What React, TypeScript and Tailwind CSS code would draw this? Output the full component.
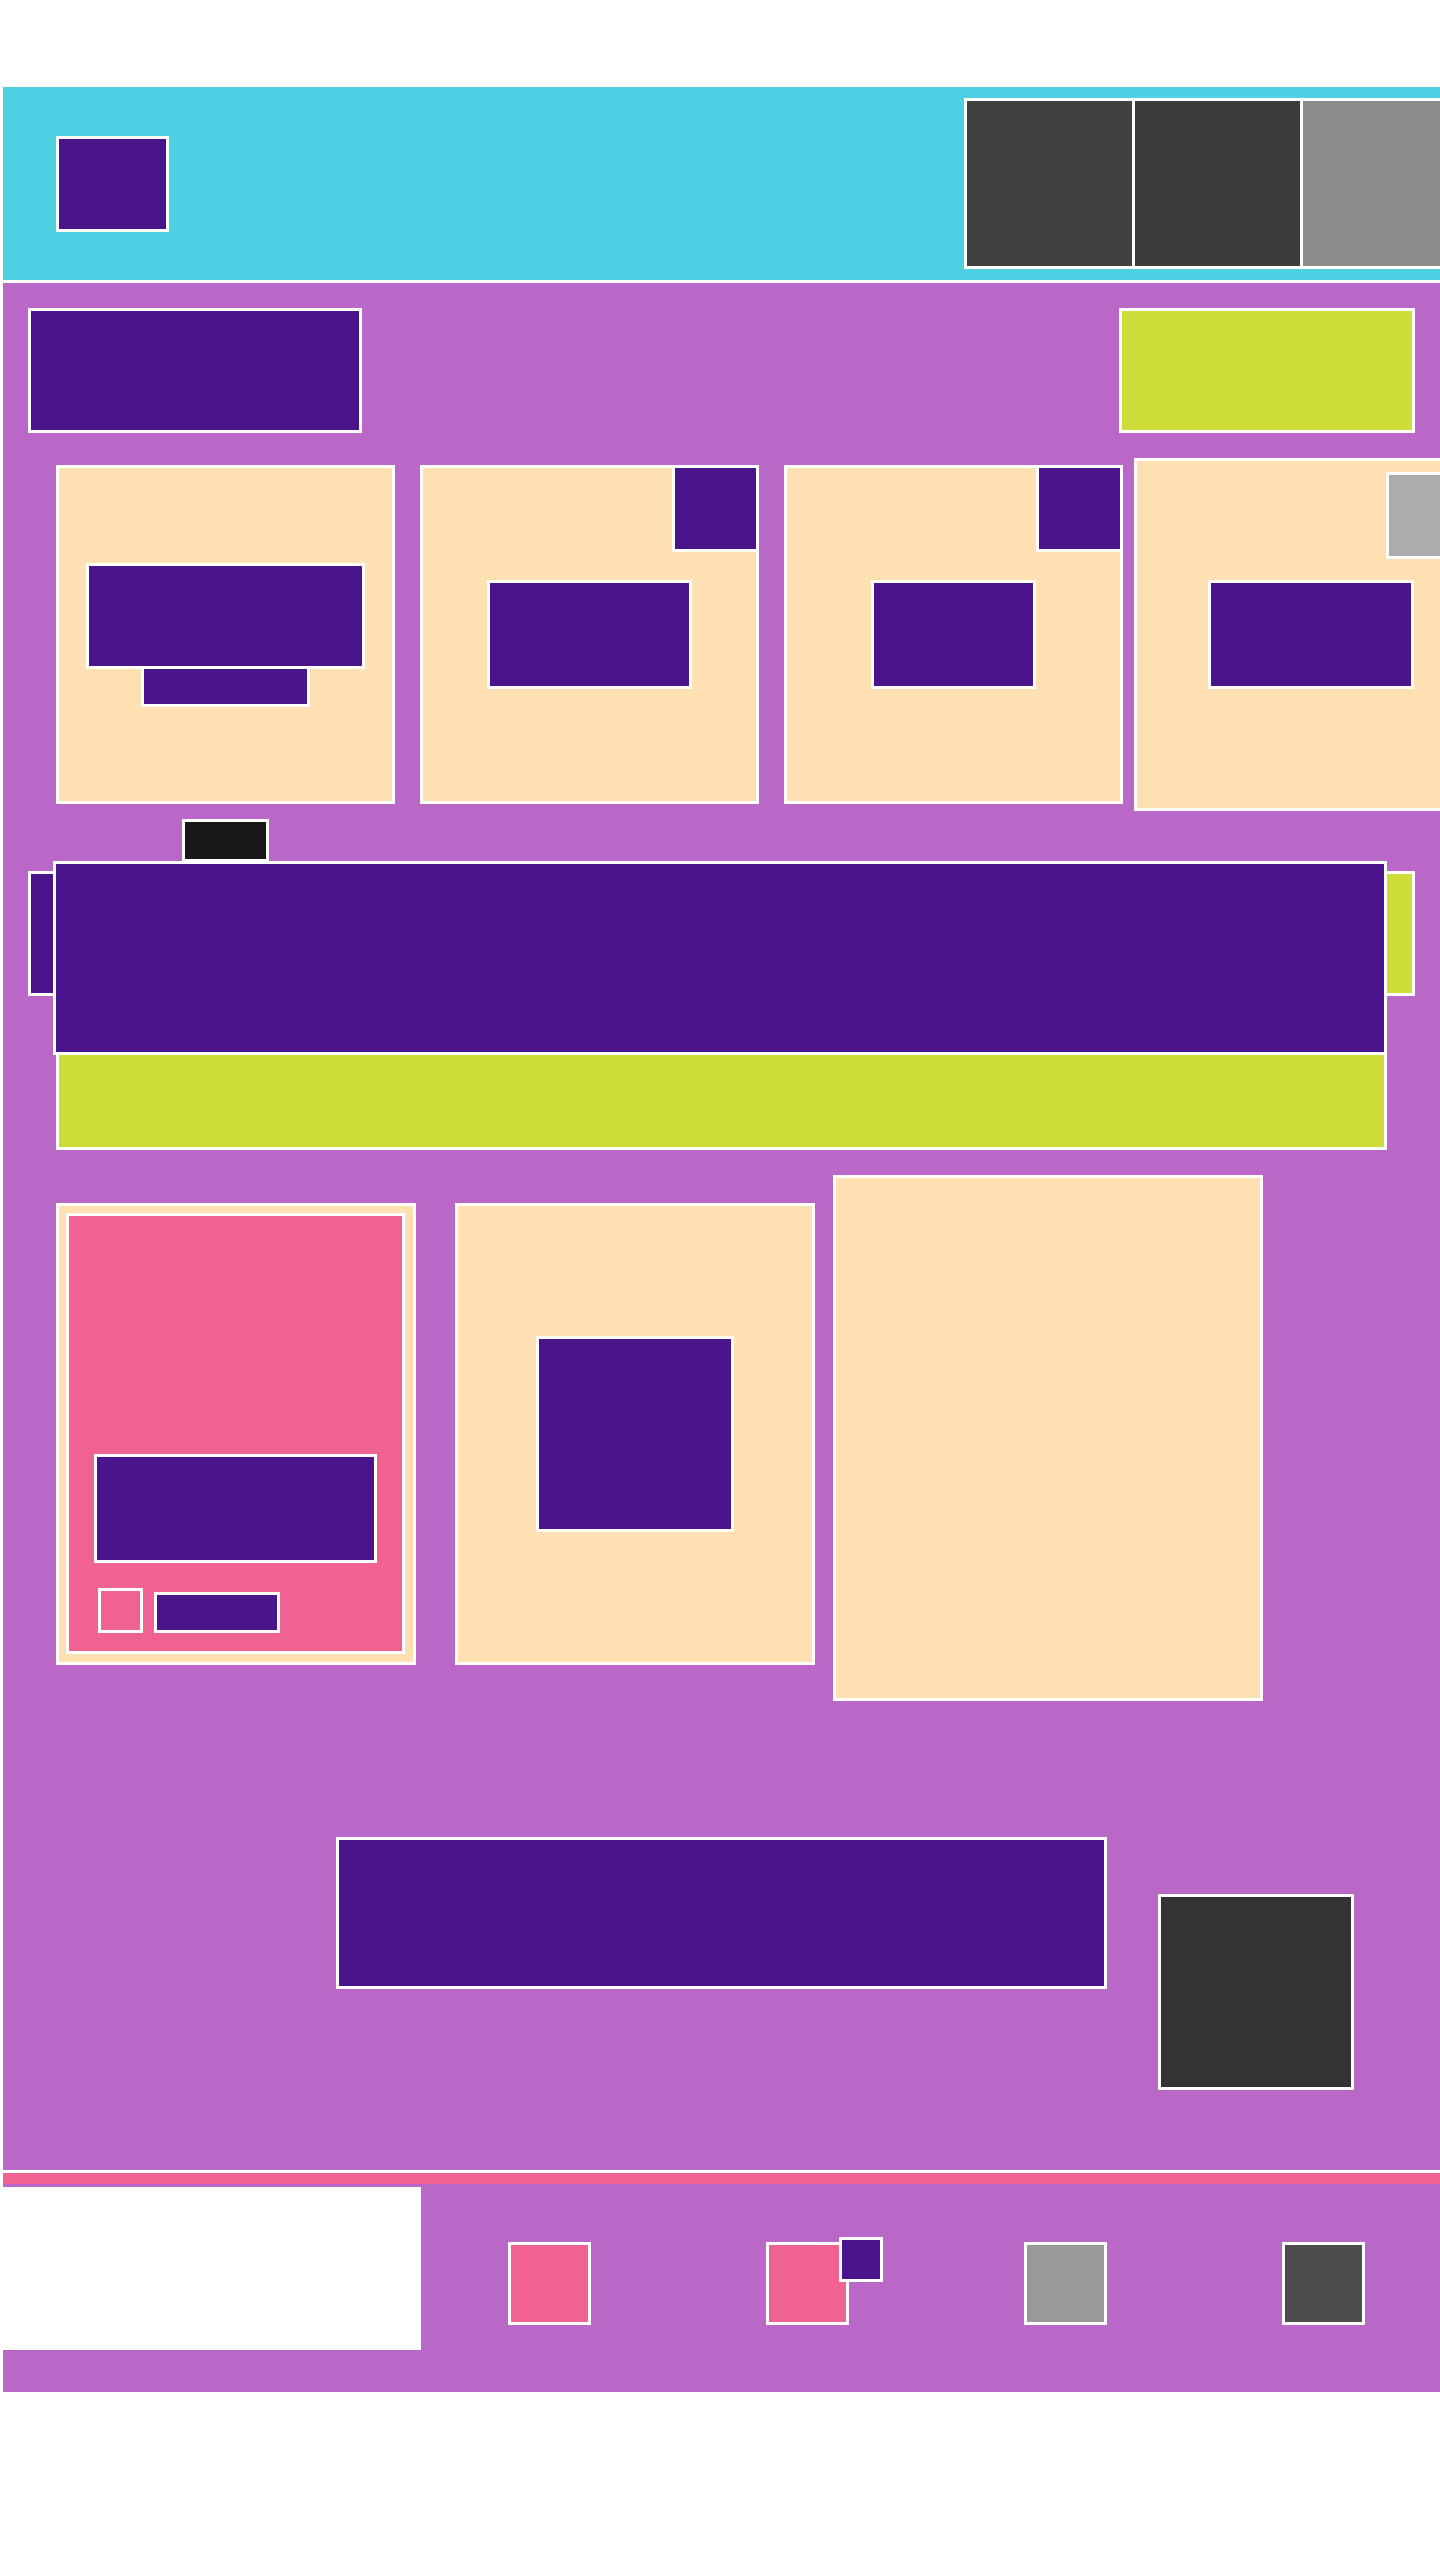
import React from "react";

const B = "border-[3px] border-white";

function Card({ children, className = "" }: { children?: React.ReactNode; className?: string }) {
  return (
    <div className={`relative shrink-0 bg-[#ffe0b2] ${B} flex items-center justify-center ${className}`}>
      {children}
    </div>
  );
}

export default function App() {
  return (
    <div className="w-[1440px] min-h-[2560px] overflow-hidden bg-white pt-[87px] pl-[3px]" style={{ fontFamily: "Inter, sans-serif" }}>
      {/* Header */}
      <header className="w-[1437px] h-[196px] bg-[#4dd0e1] border-b-[3px] border-white flex items-center">
        <div className={`shrink-0 ml-[53px] w-[113px] h-[96px] bg-[#4a148c] ${B}`} />
        <nav className="shrink-0 ml-[795px] flex gap-[3px] bg-white p-[3px]">
          <div className="w-[165px] h-[165px] bg-[#414141]" />
          <div className="w-[165px] h-[165px] bg-[#3b3b3b]" />
          <div className="w-[165px] h-[165px] bg-[#8d8d8d]" />
        </nav>
      </header>

      {/* Main */}
      <main className="w-[1437px] bg-[#ba68c8] pt-[25px] pb-[80px] border-b-[3px] border-white">
        {/* Title row */}
        <div className="flex justify-between px-[25px]">
          <div className={`w-[334px] h-[125px] bg-[#4a148c] ${B}`} />
          <div className={`w-[296px] h-[125px] bg-[#cddc39] ${B}`} />
        </div>

        {/* Cards row */}
        <div className="mt-[25px] flex items-center gap-[25px] pl-[53px]">
          <Card className="w-[339px] h-[339px]">
            <div className="flex flex-col items-center">
              <div className={`w-[279px] h-[106px] bg-[#4a148c] ${B}`} />
              <div className={`-mt-[3px] w-[169px] h-[41px] bg-[#4a148c] ${B}`} />
            </div>
          </Card>
          <Card className="w-[339px] h-[339px]">
            <div className={`w-[205px] h-[109px] bg-[#4a148c] ${B}`} />
            <div className={`absolute -top-[3px] -right-[3px] w-[87px] h-[87px] bg-[#4a148c] ${B}`} />
          </Card>
          <Card className="w-[339px] h-[339px]">
            <div className={`w-[165px] h-[109px] bg-[#4a148c] ${B}`} />
            <div className={`absolute -top-[3px] -right-[3px] w-[87px] h-[87px] bg-[#4a148c] ${B}`} />
          </Card>
          <Card className="-ml-[14px] w-[353px] h-[353px]">
            <div className={`w-[206px] h-[109px] bg-[#4a148c] ${B}`} />
            <div className={`absolute top-[11px] right-[11px] w-[87px] h-[87px] bg-[#acacac] ${B}`} />
          </Card>
        </div>

        {/* Toolbar row with overlay */}
        <div className="relative mt-[60px] flex justify-between px-[25px]">
          <div className={`w-[334px] h-[125px] bg-[#4a148c] ${B}`} />
          <div className={`w-[296px] h-[125px] bg-[#cddc39] ${B}`} />
          <div className="absolute left-[50px] -top-[52px] w-[1334px] flex flex-col">
            <div className={`ml-[129px] w-[87px] h-[43px] bg-[#181818] ${B}`} />
            <div className={`-mt-[1px] w-[1334px] h-[194px] bg-[#4a148c] ${B}`} />
            <div className={`-mt-[3px] ml-[3px] w-[1331px] h-[98px] bg-[#cddc39] ${B}`} />
          </div>
        </div>

        {/* Lower cards row */}
        <div className="mt-[207px] flex items-start pl-[53px]">
          <div className={`shrink-0 w-[360px] h-[462px] bg-[#ffe0b2] ${B} p-[7px]`}>
            <div className={`w-[339px] h-[441px] bg-[#f06292] ${B} flex flex-col justify-end pl-[25px] pb-[18px]`}>
              <div className={`w-[283px] h-[109px] bg-[#4a148c] ${B}`} />
              <div className="mt-[25px] ml-[4px] flex items-end gap-[11px]">
                <div className={`w-[45px] h-[45px] bg-[#f06292] ${B}`} />
                <div className={`w-[126px] h-[41px] bg-[#4a148c] ${B}`} />
              </div>
            </div>
          </div>
          <div className={`shrink-0 ml-[39px] w-[360px] h-[462px] bg-[#ffe0b2] ${B} flex items-center justify-center`}>
            <div className={`w-[198px] h-[196px] bg-[#4a148c] ${B}`} />
          </div>
          <div className={`shrink-0 ml-[18px] -mt-[28px] w-[430px] h-[526px] bg-[#ffe0b2] ${B}`} />
        </div>

        {/* Bottom row */}
        <div className="mt-[136px] flex items-start pl-[333px]">
          <div className={`shrink-0 w-[771px] h-[152px] bg-[#4a148c] ${B}`} />
          <div className={`shrink-0 ml-[51px] mt-[57px] w-[196px] h-[196px] bg-[#333333] ${B}`} />
        </div>
      </main>

      {/* Footer */}
      <footer className="w-[1437px] border-t-[11px] border-[#f06292] bg-[#ba68c8] pt-[3px] pb-[42px] flex items-start">
        <div className="shrink-0 w-[418px] h-[163px] bg-white" />
        <div className="relative flex items-start pt-[55px]">
          <div className={`ml-[87px] w-[83px] h-[83px] bg-[#f06292] ${B}`} />
          <div className="relative ml-[175px]">
            <div className={`w-[83px] h-[83px] bg-[#f06292] ${B}`} />
            <div className={`absolute -top-[5px] left-[73px] w-[44px] h-[45px] bg-[#4a148c] ${B}`} />
          </div>
          <div className={`ml-[175px] w-[83px] h-[83px] bg-[#999999] ${B}`} />
          <div className={`ml-[175px] w-[83px] h-[83px] bg-[#4d4d4d] ${B}`} />
        </div>
      </footer>
    </div>
  );
}
